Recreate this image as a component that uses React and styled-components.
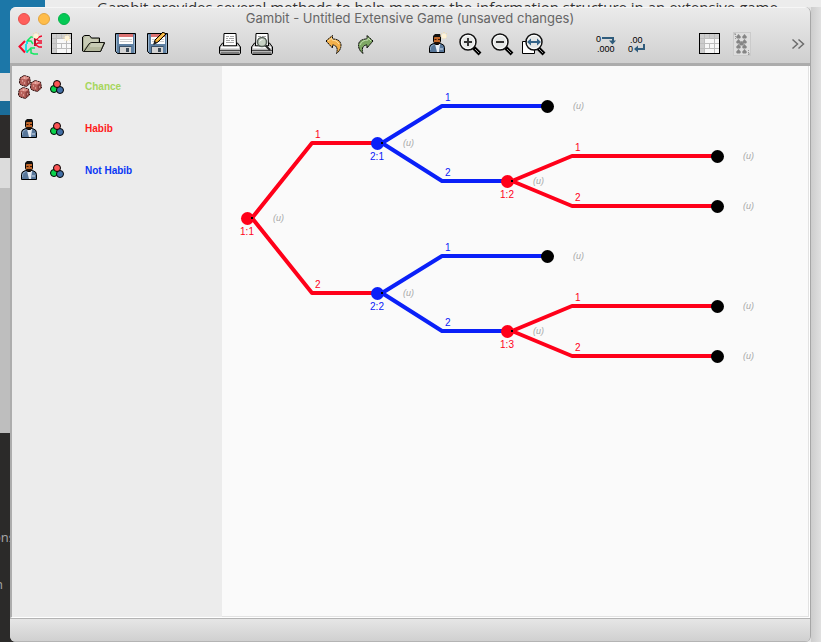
import React from 'react';
import styled, { createGlobalStyle } from 'styled-components';

const Global = createGlobalStyle`
  * { box-sizing: border-box; }
  body { margin: 0; background: #dedede; font-family: "Liberation Sans", Arial, sans-serif; }
  button { appearance: none; border: 0; padding: 0; margin: 0; background: none; display: block; cursor: pointer; }
  svg { display: block; }
`;

/* ---------- page behind the window ---------- */

const Desktop = styled.div`
  min-height: 100vh;
  display: flex;
  flex-direction: column;
  background: linear-gradient(90deg, #1c77a8 0 45px, #e3e3e3 45px);
  overflow: hidden;
`;

const ArticleStrip = styled.div`
  height: 7px;
  margin-left: 45px;
  padding-left: 52px;
  overflow: hidden;
  background: #ececec;
`;

const ArticleText = styled.p`
  margin: 0;
  font: 15px/14px "Open Sans", sans-serif;
  color: #333;
  white-space: nowrap;
`;

const Stage = styled.div`
  flex: 1;
  display: grid;
  grid-template-columns: 10px minmax(0, 1fr) 10px;
  background: linear-gradient(#2b2a29, #2b2a29) left bottom / 45px 45px no-repeat;
`;

const Gutter = styled.div`
  display: flex;
  flex-direction: column;
  overflow: hidden;
`;

const Band = styled.div`
  height: ${(p) => p.$h}px;
  background: ${(p) => p.$c};
`;

const DarkBand = styled.div`
  flex: 1;
  padding-top: 93px;
  background: #2b2a29;
  color: #a8a8a8;
  font: 13px/22px "Open Sans", sans-serif;
  white-space: nowrap;
`;

const CutWord = styled.div`
  height: 47px;
  text-indent: ${(p) => p.$shift}px;
`;

const RightGutter = styled.div`
  background: linear-gradient(90deg, #cdcdcd, #e0e0e0);
`;

/* ---------- window ---------- */

const Window = styled.main`
  display: flex;
  flex-direction: column;
  border-radius: 6px;
  overflow: hidden;
  background: #d4d4d4;
  border-right: 1px solid #a6a6a6;
`;

const Header = styled.header`
  height: 59px;
  background: linear-gradient(#ebebeb, #cfcfcf);
  border-top: 1px solid #f6f6f6;
  border-bottom: 3px solid #acacac;
`;

const TitleBar = styled.div`
  height: 22px;
  padding: 0 8px;
  display: grid;
  grid-template-columns: 52px 1fr 52px;
  align-items: center;
`;

const Lights = styled.div`
  display: flex;
  gap: 8px;
`;

const Light = styled.button`
  width: 12px;
  height: 12px;
  border-radius: 50%;
  background: ${(p) => p.$fill};
  border: 1px solid ${(p) => p.$edge};
`;

const Title = styled.h1`
  margin: 0;
  padding-bottom: 2px;
  text-align: center;
  font: 400 13px/18px Inter, sans-serif;
  color: #666;
  white-space: nowrap;
`;

const Toolbar = styled.div`
  display: flex;
  align-items: center;
  justify-content: space-between;
  padding: 2px 5px 0 8px;
`;

const Groups = styled.div`
  display: flex;
  gap: 48px;
`;

const Group = styled.div`
  display: flex;
  gap: 8px;
`;

const Tool = styled.button`
  width: 24px;
  height: 24px;
`;

const Overflow = styled.button`
  flex: none;
  width: 14px;
`;

const Body = styled.div`
  flex: 1;
  display: grid;
  grid-template-columns: 210px minmax(0, 1fr);
  border-left: 2px solid #adadad;
  border-right: 1px solid #fff;
  border-bottom: 1px solid #fff;
`;

const Players = styled.ul`
  margin: 0;
  padding: 0;
  list-style: none;
  background: #ececec;
`;

const Player = styled.li`
  height: 42px;
  display: grid;
  grid-template-columns: 24px 14px 1fr;
  column-gap: 8px;
  align-items: center;
  padding-left: 6px;
`;

const PlayerName = styled.span`
  padding-left: 13px;
  font: bold 10px/14px "Liberation Sans", Arial, sans-serif;
  color: ${(p) => p.$color};
`;

const Canvas = styled.section`
  background: #fafafa;
  border-right: 1px solid #e2e2e2;
  border-bottom: 1px solid #e2e2e2;
  overflow: hidden;
`;

const StatusBar = styled.footer`
  height: 24px;
  border-top: 1px solid #b4b4b4;
  border-bottom: 1px solid #b4b4b4;
  background: linear-gradient(#e6e6e6, #d0d0d0);
`;

/* ---------- icons ---------- */

const Icon = ({ children, size = 24 }) => (
  <svg width={size} height={size} viewBox={`0 0 ${size} ${size}`} fill="none" aria-hidden="true">
    {children}
  </svg>
);

const Spark = ({ x, y }) => (
  <g>
    <path d={`M${x - 4} ${y}h8M${x} ${y - 4}v8M${x - 3} ${y - 3}l6 6M${x + 3} ${y - 3}l-6 6`} stroke="#f3d79a" strokeDasharray="1 1" />
    <circle cx={x} cy={y} r="2.5" fill="#fff3d6" />
  </g>
);

const NewTree = () => (
  <Icon>
    <path d="M7 9L1.500 14.500l5.500 6" stroke="#f2082c" strokeWidth="2" />
    <path d="M9 9v3M8 12v7M9 18v3" stroke="#1ce0e8" strokeWidth="2" />
    <path d="M9 9l4-4h2M10 9h3l2 3M9 20l4-4h4M13 17v4l3 1h4" stroke="#12e860" strokeWidth="1.500" />
    <path d="M17 4v10" stroke="#b0142c" strokeWidth="2" />
    <path d="M18 8l3-3 3-1M18 7l3 2h3M17 13l3-2h4M18 13l3 2h3" stroke="#f2082c" strokeWidth="1.500" />
    <Spark x={18} y={4} />
  </Icon>
);

const Grid = ({ spark }) => (
  <Icon>
    <rect x="1.5" y="1.5" width="20" height="20" fill="#f8f8f8" stroke="#000" />
    <path d="M2 2h19v4H6v15H2z" fill="#cdcdcd" />
    <path d="M2 6.500h19M2 11.500h19M2 16.500h19" stroke="#bdbdbd" />
    <path d="M6.500 2v19M11.500 2v5M16.500 2v5M16.500 7v5M11.500 12v5M16.500 12v5M16.500 17v4" stroke="#bdbdbd" />
    {spark && <Spark x={17} y={6} />}
  </Icon>
);

const Folder = () => (
  <Icon>
    <path d="M.5 19V5l2-1.500h5l2 2.500h8v5h5l-4 8.500h-17z" fill="#a5aa8f" stroke="#000" strokeLinejoin="round" />
    <path d="M2 17V6l2-2h3l2 3h7v4H7z" fill="#c9ccb6" />
    <path d="M2 19.500L7 12q1-1.500 3-1.500h12.500l-4 9z" fill="#b3b79c" stroke="#15150f" />
    <path d="M9 12h12M8 14h12" stroke="#dcdfcc" />
  </Icon>
);

const Floppy = ({ pencil }) => (
  <Icon>
    <path d="M1.500 1.500h20v20H3.500l-2-2z" fill="#5f81a3" stroke="#000" />
    <path d="M2.500 3v16M20.500 3v18" stroke="#9bb5cc" />
    <rect x="5" y="2" width="14" height="10" fill="#fff" />
    <rect x="5" y="2" width="14" height="3" fill="#dc7474" />
    <path d="M6 7.500h12M6 9.500h12" stroke="#cdcdcd" />
    <rect x="6" y="15" width="11" height="6" fill="#d3d3d3" />
    <path d="M12 16h3v4h-3z" fill="#3e4b58" />
    <path d="M5.500 21v-6.500h12" stroke="#3b5065" />
    {pencil && (
      <g>
        <path d="M8 12l1-4 8-8 3 2-8 8z" fill="#e9a52f" stroke="#000" />
        <path d="M7 13l2-4 2 2z" fill="#222" />
        <path d="M11 8l7-6" stroke="#ffdc84" />
      </g>
    )}
  </Icon>
);

const Printer = ({ preview }) => (
  <Icon>
    <path d="M5.500 14l.5-12.500h12l.5 12.500z" fill="#fff" stroke="#000" />
    <path d="M8 4.500h3M12 4.500h4M8 6.500h2M11 6.500h5M8 8.500h4M13 8.500h3M8 10.500h8" stroke="#a5a5a5" />
    <path d="M1.500 15l3-4h1v3h13v-3h1l3 4v6l-1 1.500h-19l-1-1.500z" fill="#b8b8b8" stroke="#000" strokeLinejoin="round" />
    <path d="M3 15.500h18" stroke="#fff" strokeWidth="2" />
    <path d="M2 18.500h20" stroke="#444" />
    <path d="M3 21h18" stroke="#7d7d7d" strokeWidth="2" />
    {preview && (
      <g>
        <path d="M15 13l5 5" stroke="#222" strokeWidth="2" />
        <circle cx="12" cy="10" r="4.500" fill="#c8d2c5" stroke="#59635b" strokeWidth="1.500" />
        <path d="M9.500 9.500q1-2 3-2" stroke="#fff" />
      </g>
    )}
  </Icon>
);

const Undo = () => (
  <Icon>
    <path d="M4 9l6.500-5.500V7q8 0 8.500 6 0 5-4.500 8.500 1.500-5-.5-7-1-1.500-3.500-1.500v3z" fill="#f3b04a" stroke="#000" strokeDasharray="2 0.500" />
    <path d="M6 9l4-3v2q5 0 7 4" stroke="#ffdf9e" />
  </Icon>
);

const Redo = () => (
  <Icon>
    <path d="M19 9l-6-5.500V7q-8 0-8.500 6 0 5 4.500 8.500-1.500-5 .5-7 1-1.500 3.500-1.500v3z" fill="#7da763" stroke="#000" strokeDasharray="2 0.500" />
    <path d="M17 9l-3-3v2q-6 0-8 5" stroke="#c4dfb0" />
  </Icon>
);

const Person = ({ spark }) => (
  <Icon>
    <path d="M3.500 20.500v-5q0-3 4-4h7q4 1 4 4v5z" fill="#58779a" stroke="#000" strokeLinejoin="round" />
    <path d="M4.500 18v-2q0-2 3-3" stroke="#89a5c1" />
    <path d="M9 12h5l-1 8h-2z" fill="#e8eef6" />
    <path d="M14 17h3" stroke="#d9e4f0" />
    <path d="M7.500 4.500h7v5l-2 3h-3l-2-3z" fill="#c0672a" stroke="#000" strokeLinejoin="round" />
    <path d="M7 6V4l2-2h5l1 2v2l-1-1h-5z" fill="#111" />
    <path d="M8.500 7.500h2M12 7.500h2" stroke="#3c1704" />
    <path d="M9 10h4v2h-4z" fill="#20110a" />
    {spark && <Spark x={18} y={4} />}
  </Icon>
);

const Lens = ({ children, page }) => (
  <Icon>
    {page && <path d="M.5 9.500h12v12H.5z" fill="#fff" stroke="#000" />}
    <path d="M15 15l7 7" stroke="#000" strokeWidth="4" />
    <path d="M17 17l4 4" stroke="#999" />
    <circle cx={page ? 12 : 10} cy="10" r="8" fill="#e5e7e6" stroke="#111" strokeWidth="1.500" />
    <circle cx={page ? 12 : 10} cy="10" r="6.500" stroke="#fff" />
    {children}
  </Icon>
);

const ZoomIn = () => (
  <Lens><path d="M6 10h8M10 6v8" stroke="#333" strokeWidth="2" /></Lens>
);
const ZoomOut = () => (
  <Lens><path d="M6 10h8" stroke="#333" strokeWidth="2" /></Lens>
);
const ZoomFit = () => (
  <Lens page>
    <path d="M7 10h10" stroke="#356489" strokeWidth="2" />
    <path d="M5 10l4-3.500v7zM19 10l-4-3.500v7z" fill="#356489" />
  </Lens>
);

const IconText = styled.text`
  font: 9px "Liberation Sans", Arial, sans-serif;
  fill: #000;
`;

const MoreDecimals = () => (
  <Icon>
    <IconText x="2" y="10">0</IconText>
    <path d="M8 6h11v3" stroke="#2f5c7c" strokeWidth="2" />
    <path d="M15 8.500h7l-3.500 4z" fill="#2f5c7c" />
    <IconText x="3" y="20">.000</IconText>
  </Icon>
);

const FewerDecimals = () => (
  <Icon>
    <IconText x="4" y="11">.00</IconText>
    <IconText x="2" y="20">0</IconText>
    <path d="M10 17h8v-5" stroke="#2f5c7c" strokeWidth="2" />
    <path d="M12 13.500v7L8 17z" fill="#2f5c7c" />
  </Icon>
);

const PIPS = [[8, 5], [14, 5], [8, 10], [14, 10], [11, 12], [8, 15], [14, 15], [8, 20], [14, 20]];

const CardIcon = () => (
  <Icon>
    <rect x="3.500" y=".5" width="17" height="23" fill="#dedede" stroke="#cbcbcb" />
    {PIPS.map(([x, y]) => (
      <path key={`${x}-${y}`} d={`M${x + 0.5} ${y - 3}l2.500 3-1 1.500h-3l-1-1.500z`} fill="#858585" />
    ))}
    <path d="M5.500 2v5M18.500 18v5" stroke="#999" strokeDasharray="1 1" />
    <path d="M4 2h2M18 22h2" stroke="#999" />
  </Icon>
);

const Die = ({ x, y }) => (
  <g transform={`translate(${x} ${y})`}>
    <path d="M1 3l4-2.500 5.500 1.500 1 6-4 3.500-5.500-1.500L.5 8z" fill="#b9625c" stroke="#2a0d0c" strokeDasharray="2 0.500" />
    <path d="M1.500 3.500l4-2.500 5 1.500-3 2z" fill="#df948d" />
    <path d="M7.500 5v6l3.500-3V3z" fill="#8c403d" />
    <path d="M3 6h1M5 8h1M5 3h1M9 7h1" stroke="#f4cdc4" />
  </g>
);

const Dice = () => (
  <Icon>
    <Die x={1} y={0} />
    <Die x={12} y={5} />
    <Die x={0} y={12} />
  </Icon>
);

const Swatches = () => (
  <Icon size={14}>
    <circle cx="4" cy="9" r="3.500" fill="#0bd34b" stroke="#000" />
    <circle cx="10" cy="10" r="3.500" fill="#426fa6" stroke="#000" />
    <circle cx="7" cy="4" r="3.500" fill="#fb5454" stroke="#000" />
  </Icon>
);

const Chevrons = () => (
  <Icon size={14}>
    <path d="M1.500 2.500l5 4.500-5 4.500M7.500 2.500l5 4.500-5 4.500" stroke="#6c6c6c" strokeWidth="1.500" />
  </Icon>
);

/* ---------- game tree ---------- */

const RED = '#ff0019';
const BLUE = '#0a20f8';

const NODES = [
  { x: 25, y: 152, color: RED, label: '1:1' },
  { x: 155, y: 77, color: BLUE, label: '2:1' },
  { x: 155, y: 227, color: BLUE, label: '2:2' },
  { x: 325, y: 40, color: '#000' },
  { x: 285, y: 115, color: RED, label: '1:2' },
  { x: 325, y: 190, color: '#000' },
  { x: 285, y: 265, color: RED, label: '1:3' },
  { x: 495, y: 90, color: '#000' },
  { x: 495, y: 140, color: '#000' },
  { x: 495, y: 240, color: '#000' },
  { x: 495, y: 290, color: '#000' },
];

const BRANCHES = [
  [0, 1, '1'], [0, 2, '2'],
  [1, 3, '1'], [1, 4, '2'],
  [2, 5, '1'], [2, 6, '2'],
  [4, 7, '1'], [4, 8, '2'],
  [6, 9, '1'], [6, 10, '2'],
];

const TreeSvg = styled.svg`
  font: 10px "Liberation Sans", Arial, sans-serif;
`;

const Outcome = styled.text`
  font-size: 9px;
  font-style: italic;
  fill: #a9a9a9;
`;

const GameTree = () => (
  <TreeSvg width="560" height="320" viewBox="0 0 560 320" role="img" aria-label="Game tree">
    {BRANCHES.map(([a, b, label]) => {
      const from = NODES[a];
      const to = NODES[b];
      return (
        <g key={`${a}-${b}`}>
          <path
            d={`M${from.x + 5} ${from.y}L${from.x + 65} ${to.y}H${to.x}`}
            fill="none"
            stroke={from.color}
            strokeWidth="4"
            strokeLinejoin="round"
          />
          <text x={from.x + 68} y={to.y - 5} fill={from.color}>{label}</text>
        </g>
      );
    })}
    {NODES.map((n) => (
      <g key={`${n.x}-${n.y}`}>
        <circle cx={n.x + 0.5} cy={n.y + 0.5} r="6.500" fill={n.color} />
        {n.label && <rect x={n.x + 4} y={n.y - 1} width="2" height="2" fill="#000" />}
        {n.label && <text x={n.x} y={n.y + 17} textAnchor="middle" fill={n.color}>{n.label}</text>}
        <Outcome x={n.x + 26} y={n.y + 3}>(u)</Outcome>
      </g>
    ))}
  </TreeSvg>
);

/* ---------- data ---------- */

const TOOL_GROUPS = [
  [
    ['New extensive game', <NewTree />],
    ['New strategic game', <Grid spark />],
    ['Open', <Folder />],
    ['Save', <Floppy />],
    ['Save as', <Floppy pencil />],
  ],
  [['Print', <Printer />], ['Print preview', <Printer preview />]],
  [['Undo', <Undo />], ['Redo', <Redo />]],
  [
    ['Add player', <Person spark />],
    ['Zoom in', <ZoomIn />],
    ['Zoom out', <ZoomOut />],
    ['Zoom to fit', <ZoomFit />],
  ],
  [['More decimals', <MoreDecimals />], ['Fewer decimals', <FewerDecimals />]],
  [['Strategic view', <Grid />], ['Profiles', <CardIcon />]],
];

const PLAYERS = [
  { name: 'Chance', color: '#a6d65c', icon: <Dice /> },
  { name: 'Habib', color: '#ff1a1a', icon: <Person /> },
  { name: 'Not Habib', color: '#0a37f5', icon: <Person /> },
];

const BANDS = [
  [66, '#1c77a8'], [28, '#dedede'], [14, '#1a6c99'], [43, '#2d2b2a'], [30, '#dcdcdc'], [245, '#bebebe'],
];

export default function App() {
  return (
    <Desktop>
      <Global />
      <ArticleStrip>
        <ArticleText>
          Gambit provides several methods to help manage the information structure in an extensive game.
        </ArticleText>
      </ArticleStrip>
      <Stage>
        <Gutter>
          {BANDS.map(([h, c], i) => <Band key={i} $h={h} $c={c} />)}
          <DarkBand>
            <CutWord $shift={-7}>ons</CutWord>
            <CutWord $shift={-5}>n</CutWord>
          </DarkBand>
        </Gutter>
        <Window>
          <Header>
            <TitleBar>
              <Lights>
                <Light $fill="#ff5f5b" $edge="#e5504d" aria-label="Close" />
                <Light $fill="#ffbd4a" $edge="#e2a440" aria-label="Minimize" />
                <Light $fill="#04c955" $edge="#06b24a" aria-label="Zoom window" />
              </Lights>
              <Title>Gambit - Untitled Extensive Game (unsaved changes)</Title>
            </TitleBar>
            <Toolbar role="toolbar">
              <Groups>
                {TOOL_GROUPS.map((group, i) => (
                  <Group key={i}>
                    {group.map(([label, icon]) => (
                      <Tool key={label} aria-label={label}>{icon}</Tool>
                    ))}
                  </Group>
                ))}
              </Groups>
              <Overflow aria-label="More tools"><Chevrons /></Overflow>
            </Toolbar>
          </Header>
          <Body>
            <Players>
              {PLAYERS.map((p) => (
                <Player key={p.name}>
                  {p.icon}
                  <button aria-label={`Color of ${p.name}`}><Swatches /></button>
                  <PlayerName $color={p.color}>{p.name}</PlayerName>
                </Player>
              ))}
            </Players>
            <Canvas><GameTree /></Canvas>
          </Body>
          <StatusBar />
        </Window>
        <RightGutter />
      </Stage>
    </Desktop>
  );
}
